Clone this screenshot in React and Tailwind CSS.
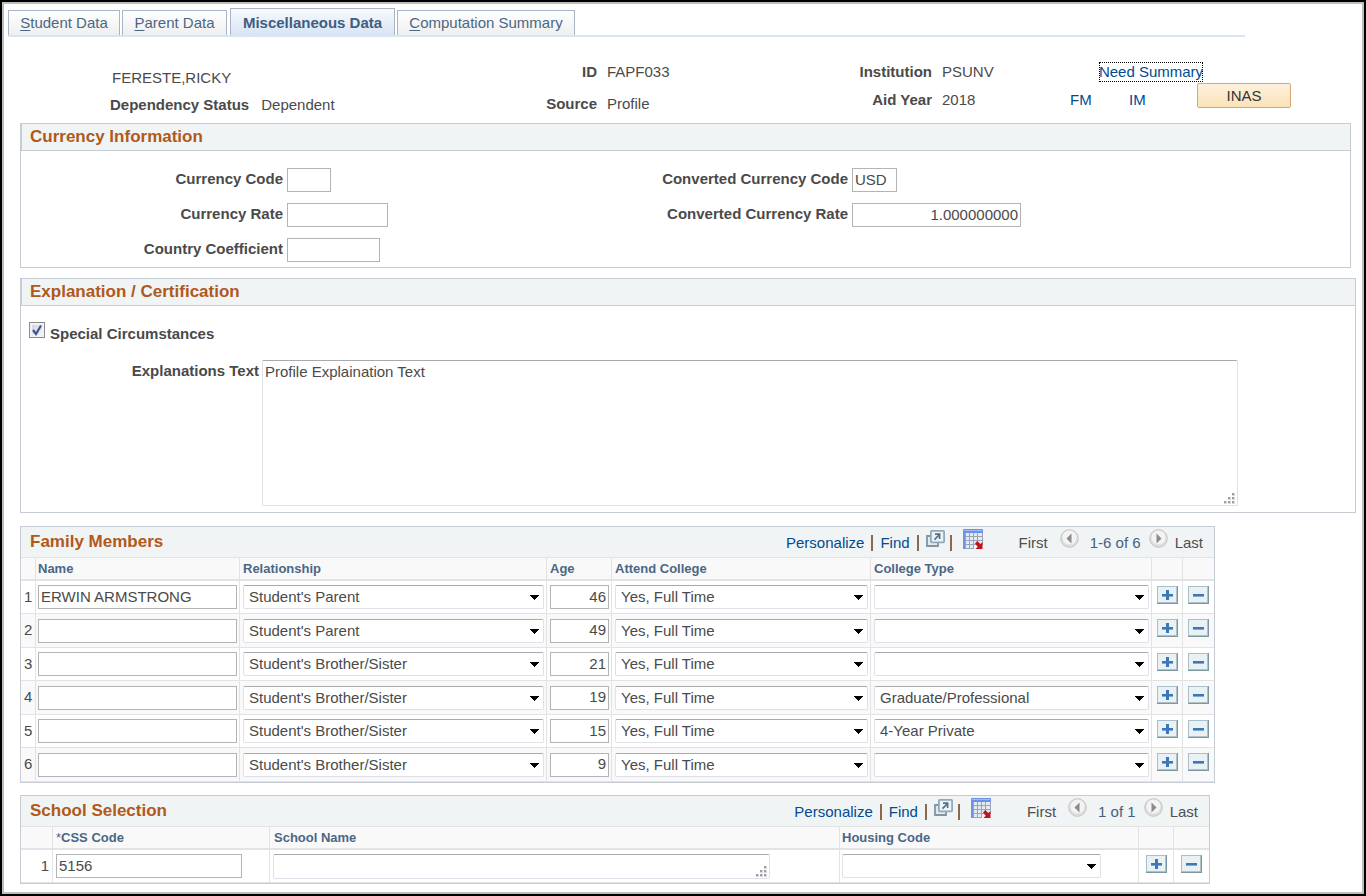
import React from "react";

const TABS = [
  { key: "S", rest: "tudent Data", width: "w-28" },
  { key: "P", rest: "arent Data", width: "w-[105px]" },
  { label: "Miscellaneous Data", active: true, width: "w-[165px]" },
  { key: "C", rest: "omputation Summary", width: "w-[178px]" },
];

const FAMILY = [
  { name: "ERWIN ARMSTRONG", relationship: "Student's Parent", age: 46, attend: "Yes, Full Time", college: "" },
  { name: "", relationship: "Student's Parent", age: 49, attend: "Yes, Full Time", college: "" },
  { name: "", relationship: "Student's Brother/Sister", age: 21, attend: "Yes, Full Time", college: "" },
  { name: "", relationship: "Student's Brother/Sister", age: 19, attend: "Yes, Full Time", college: "Graduate/Professional" },
  { name: "", relationship: "Student's Brother/Sister", age: 15, attend: "Yes, Full Time", college: "4-Year Private" },
  { name: "", relationship: "Student's Brother/Sister", age: 9, attend: "Yes, Full Time", college: "" },
];

const RELATIONSHIPS = ["Student's Parent", "Student's Brother/Sister"];
const ATTEND = ["Yes, Full Time"];
const COLLEGE_TYPES = ["", "Graduate/Professional", "4-Year Private"];

const TextInput = ({ className = "", ...props }) => (
  <input
    type="text"
    className={`block h-6 border border-[#b4b4b4] bg-white px-0.5 pb-0.5 text-[15px] text-[#4a4a4a] outline-none ${className}`}
    {...props}
  />
);

const SelectBox = ({ label, value, options, className = "w-full" }) => (
  <div className={`relative ${className}`}>
    <select
      aria-label={label}
      defaultValue={value}
      className="block h-6 w-full appearance-none rounded-xs border border-[#dfe0ea] border-t-[#a9a9ae] bg-white pr-5 pl-[5px] text-[15px] text-[#4a4a4a] outline-none"
    >
      {options.map((option) => (
        <option key={option} value={option}>
          {option}
        </option>
      ))}
    </select>
    <svg
      className="pointer-events-none absolute top-2.5 right-[5px] h-[5px] w-[9px]"
      viewBox="0 0 9 5"
      shapeRendering="crispEdges"
    >
      <path d="M0 0h9L4.5 5z" fill="#000" />
    </svg>
  </div>
);

const ResizeGrip = () => (
  <svg
    className="pointer-events-none absolute right-[3px] bottom-[2px] h-[11px] w-[11px]"
    viewBox="0 0 11 11"
    shapeRendering="crispEdges"
  >
    <path d="M8 0h3v3H8zM4 4h3v3H4zM8 4h3v3H8zM0 8h3v3H0zM4 8h3v3H4zM8 8h3v3H8z" fill="#d8d8d8" />
    <path d="M8 0h2v2H8zM4 4h2v2H4zM8 4h2v2H8zM0 8h2v2H0zM4 8h2v2H4zM8 8h2v2H8z" fill="#9d9d9d" />
  </svg>
);

const RowButton = ({ kind, row }) => (
  <button type="button" aria-label={`${kind === "add" ? "Add" : "Delete"} row ${row}`} className="block h-[18px] w-[21px]">
    <svg viewBox="0 0 21 18" className="block h-[18px] w-[21px]" shapeRendering="crispEdges">
      <rect width="21" height="18" fill="#a9bfc9" />
      <path d="M20 0h1v18H0v-1h20z" fill="#7b98a2" />
      <path d="M19 1h1v16H1v-1h18z" fill="#adc1c8" />
      <rect x="1" y="1" width="18" height="15" fill="#e9f1f4" />
      <path d="M5 8h11v3H5z" fill="#82abd3" />
      {kind === "add" && <path d="M9 4h3v10H9z" fill="#3c78b8" />}
      <path d="M5 8h11v2H5z" fill="#3c78b8" />
    </svg>
  </button>
);

const PopupIcon = () => (
  <svg viewBox="0 0 19 17" className="block h-[17px] w-[19px]">
    <path d="M4 6H1v10h11v-3" fill="#e3eaee" stroke="#8195a4" strokeWidth="1.8" />
    <rect x="4.9" y="0.9" width="13.2" height="11.4" rx="0.8" fill="#edf3f6" stroke="#93a8b9" strokeWidth="1.8" />
    <path d="M8.5 9.7 13 5M9 4.2h4.6v4.9" fill="none" stroke="#557188" strokeWidth="1.7" />
  </svg>
);

const GridIcon = () => (
  <svg viewBox="0 0 20 20" className="block h-5 w-5">
    <rect width="20" height="20" rx="1" fill="#99a4b8" />
    <path d="M1 0h18l1 1v3H0V1z" fill="#6a92e8" />
    <path d="M1 1h18v1H1z" fill="#9dbcf8" />
    <path d="M0 3h2v17H0z" fill="#6f93de" />
    <path
      d="M3 4h3v3H3zM7 4h3v3H7zM11 4h3v3h-3zM15 4h4v3h-4zM3 8h3v3H3zM7 8h3v3H7zM11 8h3v3h-3zM15 8h4v3h-4zM3 12h3v3H3zM7 12h3v3H7zM11 12h3v3h-3zM15 12h4v3h-4zM3 16h3v3H3zM7 16h3v3H7z"
      fill="#e4e9f2"
    />
    <path d="M11 16h9v4h-9z" fill="#f3f4f7" />
    <path d="M12 14.5 14.3 12l3 3 2.2-1.8V20h-7l2.2-2.3z" fill="#c2141b" />
  </svg>
);

const PagerButton = ({ direction }) => (
  <button type="button" aria-label={direction === "prev" ? "Previous rows" : "Next rows"} className="mb-[7px] block h-[19px] w-[19px]">
    <svg viewBox="0 0 19 19" className="block h-[19px] w-[19px]">
      <circle cx="9.5" cy="9.5" r="8.8" fill="#dedede" stroke="#c4c4c4" />
      <circle cx="9.5" cy="8.5" r="7" fill="#f3f3f3" />
      <path d={direction === "prev" ? "M11.5 4.5v10L6.5 9.5z" : "M7.5 4.5v10l5-5z"} fill="#8a8a8a" />
    </svg>
  </button>
);

const Separator = ({ className }) => <span className={`mt-0.5 h-4 w-[2px] bg-[#8a6a4e] ${className}`} />;

const GridToolbar = ({ title, range, className = "" }) => (
  <div className="flex h-[30px] items-center justify-between bg-[#f0f4f5] pl-[9px] text-[15px] whitespace-nowrap">
    <h2 className="text-[17px] font-bold text-[#b0591a]">{title}</h2>
    <div className={`flex items-center ${className}`}>
      <a href="#personalize" className="mt-0.5 text-[#004b91]">Personalize</a>
      <Separator className="mx-[7px]" />
      <a href="#find" className="mt-0.5 text-[#004b91]">Find</a>
      <Separator className="mx-[7px]" />
      <a href="#popup" aria-label="Zoom" className="mb-[7px]"><PopupIcon /></a>
      <Separator className="ml-[5px] mr-[11px]" />
      <a href="#download" aria-label="Download" className="mb-1.5"><GridIcon /></a>
      <span className="mt-0.5 ml-9 mr-3 text-[#4f4f4f]">First</span>
      <PagerButton direction="prev" />
      <span className="mt-0.5 ml-[11px] mr-2 text-[#43617f]">{range}</span>
      <PagerButton direction="next" />
      <span className="mt-0.5 ml-[7px] text-[#4f4f4f]">Last</span>
    </div>
  </div>
);

const HeaderCell = ({ children, className = "pl-[3px]" }) => (
  <th
    scope="col"
    className={`h-6 border-t border-r border-b-2 border-[#e3e3e3] bg-[#f9f9f9] p-0 text-left text-[13px] font-bold whitespace-nowrap text-[#4a6785] last:border-r-0 ${className}`}
  >
    {children}
  </th>
);

const Cell = ({ children, className = "px-[3px]" }) => (
  <td className={`border-r border-b border-[#e3e3e3] p-0 last:border-r-0 ${className}`}>{children}</td>
);

const Panel = ({ title, children, className = "" }) => (
  <section className={`border border-[#c6cbd4] ${className}`}>
    <h2 className="flex h-[27px] items-center border-b border-l border-[#c6cbd4] bg-[#f0f4f5] pl-2 text-[17px] font-bold text-[#b0591a]">
      {title}
    </h2>
    {children}
  </section>
);

const FieldRow = ({ id, label, labelWidth, children }) => (
  <div className="flex h-6 items-center gap-1">
    <label htmlFor={id} className={`${labelWidth} pb-0.5 text-right font-bold`}>
      {label}
    </label>
    {children}
  </div>
);

const Tabs = () => (
  <nav className="mr-[117px] ml-1 flex items-end gap-0.5 border-b-2 border-[#dae5f3] pt-1 text-[15px] whitespace-nowrap text-[#4a6785]">
    {TABS.map((tab) => (
      <a
        key={tab.rest || tab.label}
        href="#tab"
        className={`flex items-center justify-center border border-b-0 border-[#a9b4c6] bg-linear-to-b ${tab.width} ${
          tab.active
            ? "ml-px h-[27px] from-[#f7fafd] to-[#d8e4f4] pt-0.5 font-bold text-[#3f5d80]"
            : "h-[25px] from-white to-[#efefef]"
        }`}
      >
        {tab.active ? tab.label : <span><u className="underline-offset-2">{tab.key}</u>{tab.rest}</span>}
      </a>
    ))}
  </nav>
);

const StudentHeader = () => (
  <header className="flex h-[86px] items-start pt-[25px] pl-[106px] leading-5 whitespace-nowrap">
    <div className="flex w-[430px] flex-col gap-[7px] pt-1.5">
      <div className="pl-0.5">FERESTE,RICKY</div>
      <div className="flex gap-3">
        <b>Dependency Status</b>
        <span>Dependent</span>
      </div>
    </div>
    <div className="grid w-[315px] grid-cols-[57px_auto] gap-x-2.5 gap-y-3">
      <b className="text-right">ID</b>
      <span>FAPF033</span>
      <b className="text-right">Source</b>
      <span>Profile</span>
    </div>
    <div className="grid w-[215px] grid-cols-[77px_auto] gap-x-2.5 gap-y-2">
      <b className="text-right">Institution</b>
      <span>PSUNV</span>
      <b className="text-right">Aid Year</b>
      <span>2018</span>
    </div>
    <div className="text-[#004b91]">
      <a href="#need-summary" className="ml-[29px] flex h-5 w-[104px] items-center justify-center border border-dotted border-black">
        Need Summary
      </a>
      <div className="mt-px flex items-start">
        <a href="#fm" className="w-[59px] pt-[7px]">FM</a>
        <a href="#im" className="w-[68px] pt-[7px]">IM</a>
        <button
          type="button"
          className="h-[25px] w-[94px] rounded-xs border border-[#d9a775] bg-linear-to-b from-[#fdf1dd] to-[#fbe2b8] text-[#333]"
        >
          INAS
        </button>
      </div>
    </div>
  </header>
);

const CurrencyPanel = () => (
  <Panel title="Currency Information" className="mr-[11px]">
    <div className="flex pt-[17px] pb-[5px]">
      <div className="flex w-[545px] flex-col gap-[11px]">
        <FieldRow id="currency-code" label="Currency Code" labelWidth="w-[262px]">
          <TextInput id="currency-code" className="w-11" />
        </FieldRow>
        <FieldRow id="currency-rate" label="Currency Rate" labelWidth="w-[262px]">
          <TextInput id="currency-rate" className="w-[101px]" />
        </FieldRow>
        <FieldRow id="country-coefficient" label="Country Coefficient" labelWidth="w-[262px]">
          <TextInput id="country-coefficient" className="w-[93px]" />
        </FieldRow>
      </div>
      <div className="flex flex-col gap-[11px]">
        <FieldRow id="conv-code" label="Converted Currency Code" labelWidth="w-[282px]">
          <TextInput id="conv-code" defaultValue="USD" className="w-[45px]" />
        </FieldRow>
        <FieldRow id="conv-rate" label="Converted Currency Rate" labelWidth="w-[282px]">
          <TextInput id="conv-rate" defaultValue="1.000000000" className="w-[169px] text-right" />
        </FieldRow>
      </div>
    </div>
  </Panel>
);

const ExplanationPanel = () => (
  <Panel title="Explanation / Certification" className="mt-2.5 mr-1.5">
    <div className="flex items-start gap-[5px] pt-4 pl-2">
      <span className="relative h-4 w-4">
        <input
          id="special"
          type="checkbox"
          defaultChecked
          className="peer block h-4 w-4 appearance-none border border-[#8a8d90] bg-linear-to-br from-[#cdd3da] to-[#f8f9fa] inset-ring-2 inset-ring-[#f2f2f2]"
        />
        <svg viewBox="0 0 16 16" className="pointer-events-none absolute inset-0 hidden h-4 w-4 peer-checked:block">
          <path d="m4 8 3 4 5-8.5" fill="none" stroke="#3f5596" strokeWidth="2.2" />
        </svg>
      </span>
      <label htmlFor="special" className="pt-[2px] leading-5 font-bold">Special Circumstances</label>
    </div>
    <div className="flex items-start gap-[3px] pt-4 pr-[117px] pb-1.5">
      <label htmlFor="explanations" className="w-[238px] pt-px text-right leading-5 font-bold">Explanations Text</label>
      <div className="relative flex-1">
        <textarea
          id="explanations"
          defaultValue="Profile Explaination Text"
          className="block h-[146px] w-full resize-none rounded-xs border border-[#dfe0e6] border-t-[#a9a9ae] bg-white px-0.5 py-px leading-5 outline-none"
        />
        <ResizeGrip />
      </div>
    </div>
  </Panel>
);

const FamilyMembers = () => (
  <section className="mt-[13px] w-[1195px] border border-[#c6cbd4]">
    <GridToolbar title="Family Members" range="1-6 of 6" className="pr-[11px]" />
    <table className="w-full table-fixed border-separate border-spacing-0">
      <colgroup>
        <col className="w-[15px]" />
        <col className="w-[204px]" />
        <col className="w-[307px]" />
        <col className="w-[65px]" />
        <col className="w-[259px]" />
        <col className="w-[281px]" />
        <col className="w-[31px]" />
        <col className="w-[31px]" />
      </colgroup>
      <thead>
        <tr>
          <HeaderCell />
          <HeaderCell className="pl-0.5">Name</HeaderCell>
          <HeaderCell>Relationship</HeaderCell>
          <HeaderCell>Age</HeaderCell>
          <HeaderCell>Attend College</HeaderCell>
          <HeaderCell>College Type</HeaderCell>
          <HeaderCell />
          <HeaderCell />
        </tr>
      </thead>
      <tbody>
        {FAMILY.map((member, i) => (
          <tr key={i} className="h-[33px] even:h-[34px] even:bg-[#f9f9f9]">
            <Cell className="pl-[3px]">{i + 1}</Cell>
            <Cell className="px-0.5">
              <TextInput aria-label={`Name ${i + 1}`} defaultValue={member.name} className="w-full" />
            </Cell>
            <Cell className="pr-0.5 pl-[3px]">
              <SelectBox label={`Relationship ${i + 1}`} value={member.relationship} options={RELATIONSHIPS} />
            </Cell>
            <Cell className="pr-0.5 pl-[3px]">
              <TextInput aria-label={`Age ${i + 1}`} defaultValue={member.age} className="w-full text-right" />
            </Cell>
            <Cell className="pr-0.5 pl-[3px]">
              <SelectBox label={`Attend college ${i + 1}`} value={member.attend} options={ATTEND} />
            </Cell>
            <Cell className="pr-0.5 pl-[3px]">
              <SelectBox label={`College type ${i + 1}`} value={member.college} options={COLLEGE_TYPES} />
            </Cell>
            <Cell className="pb-[5px] pl-[5px]"><RowButton kind="add" row={i + 1} /></Cell>
            <Cell className="pb-[5px] pl-[5px]"><RowButton kind="delete" row={i + 1} /></Cell>
          </tr>
        ))}
      </tbody>
    </table>
  </section>
);

const SchoolSelection = () => (
  <section className="mt-3 w-[1190px] border border-[#c6cbd4]">
    <GridToolbar title="School Selection" range="1 of 1" className="pr-[11px]" />
    <table className="w-full table-fixed border-separate border-spacing-0">
      <colgroup>
        <col className="w-8" />
        <col className="w-[217px]" />
        <col className="w-[570px]" />
        <col className="w-[299px]" />
        <col className="w-[35px]" />
        <col className="w-[35px]" />
      </colgroup>
      <thead>
        <tr>
          <HeaderCell />
          <HeaderCell><span className="font-normal">*</span>CSS Code</HeaderCell>
          <HeaderCell className="pl-1">School Name</HeaderCell>
          <HeaderCell className="pl-0.5">Housing Code</HeaderCell>
          <HeaderCell />
          <HeaderCell />
        </tr>
      </thead>
      <tbody>
        <tr className="h-[33px]">
          <Cell className="pr-[3px] text-right">1</Cell>
          <Cell><TextInput aria-label="CSS Code" defaultValue="5156" className="w-[186px]" /></Cell>
          <Cell>
            <div className="relative w-[497px]">
              <textarea
                aria-label="School Name"
                className="block h-[25px] w-full resize-none overflow-hidden rounded-xs border border-[#dfe0ea] border-t-[#a9a9ae] bg-white outline-none"
              />
              <ResizeGrip />
            </div>
          </Cell>
          <Cell className="pl-0.5"><SelectBox label="Housing Code" value="" options={[""]} className="w-[259px]" /></Cell>
          <Cell className="pb-[5px] pl-[7px]"><RowButton kind="add" row={1} /></Cell>
          <Cell className="pb-[5px] pl-[7px]"><RowButton kind="delete" row={1} /></Cell>
        </tr>
      </tbody>
    </table>
  </section>
);

export default function App() {
  return (
    <div className="min-h-screen border-2 border-black bg-white font-['Liberation_Sans',Arial,sans-serif] text-[15px] text-[#4a4a4a]">
      <div className="min-h-[calc(100vh-4px)] border-2 border-[#bdbdbd] pb-2">
        <Tabs />
        <StudentHeader />
        <main className="pl-4">
          <CurrencyPanel />
          <ExplanationPanel />
          <FamilyMembers />
          <SchoolSelection />
        </main>
      </div>
    </div>
  );
}
